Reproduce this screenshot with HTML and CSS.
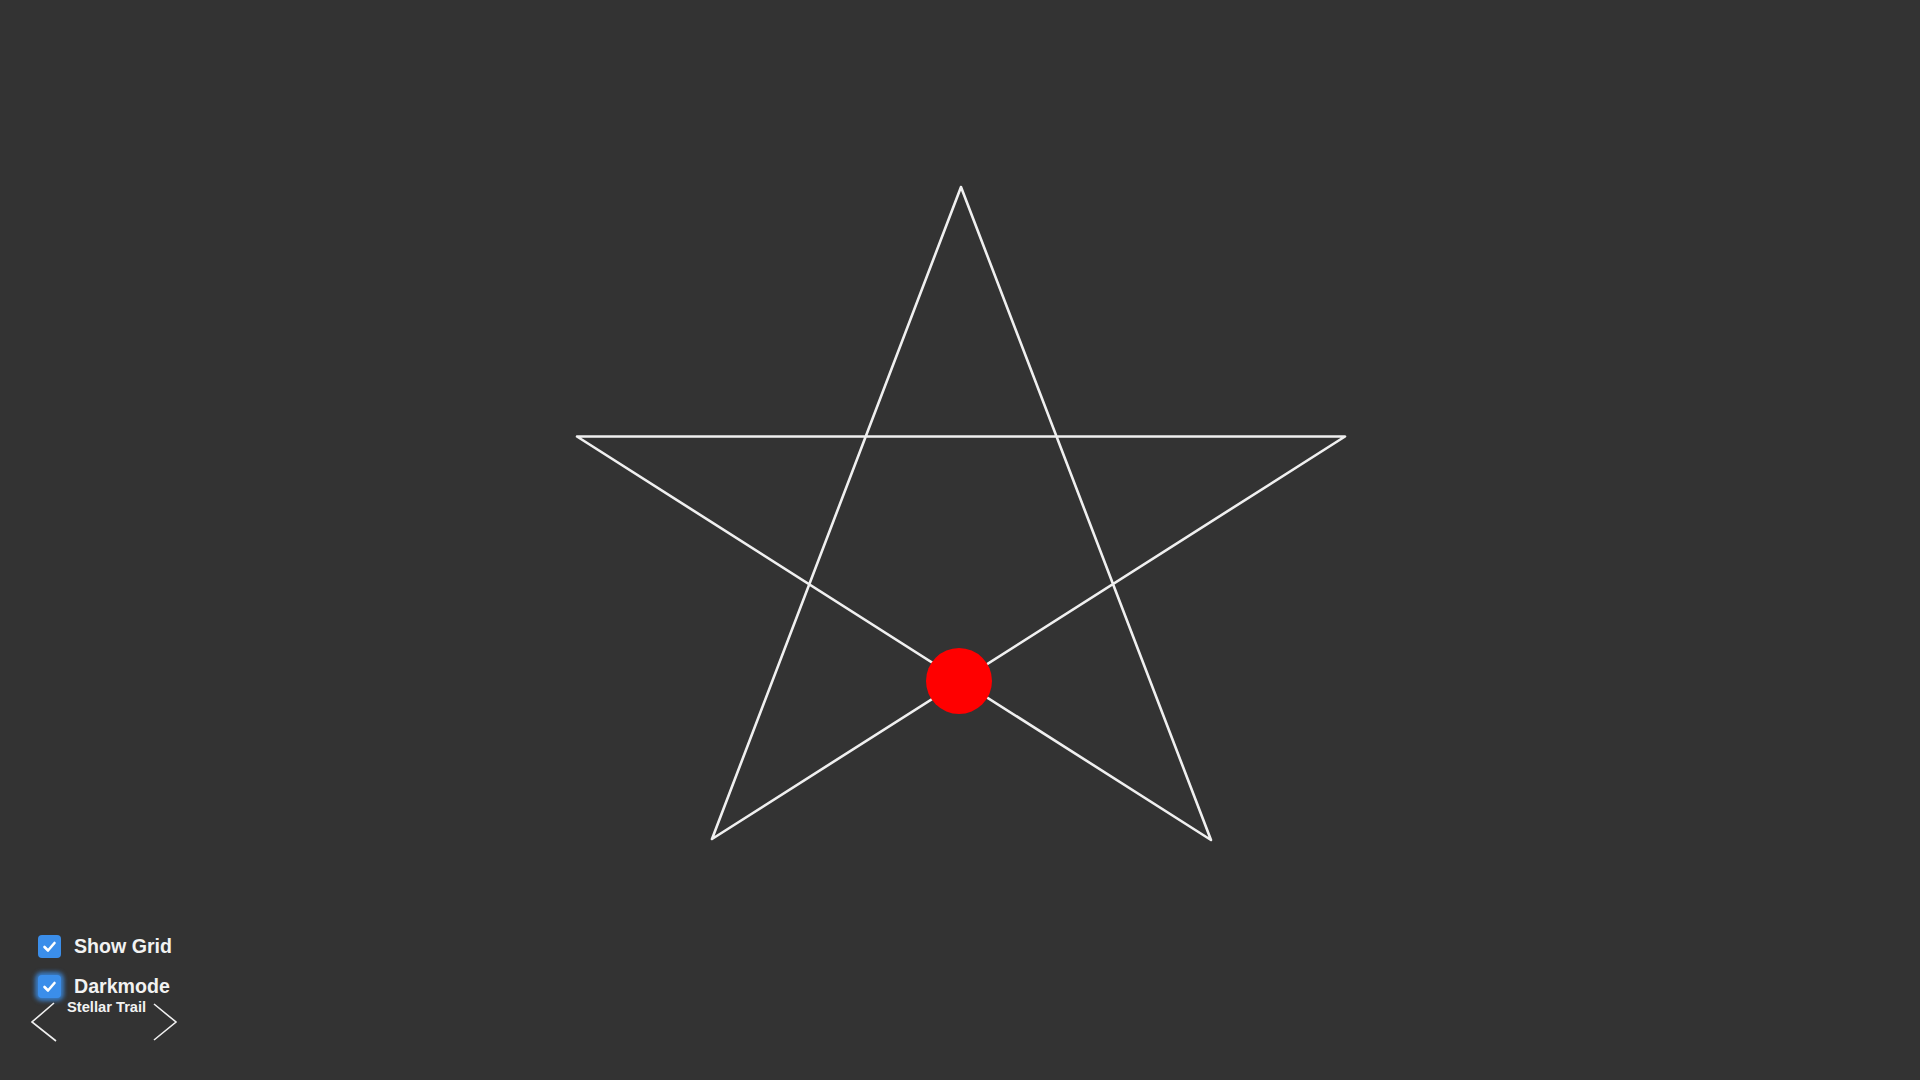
FILE: index.html
```html
<!DOCTYPE html>
<html>
<head>
<meta charset="utf-8">
<title>Stellar Trail</title>
<link rel="stylesheet" href="styles.css">
</head>
<body>
<div class="stage">
  <svg class="canvas" width="1920" height="1080" viewBox="0 0 1920 1080">
    <polygon class="star" points="961,187 712,839 1345,436.5 577,436.5 1211,840"/>
    <circle class="dot" cx="959" cy="681" r="33"/>
  </svg>
  <div class="panel">
    <div class="row">
      <span class="box"><svg width="23" height="23" viewBox="0 0 23 23"><polyline points="6.5,12 10,15.5 16.5,8" class="tick"/></svg></span>
      <span class="label">Show Grid</span>
    </div>
    <div class="row">
      <span class="box focus"><svg width="23" height="23" viewBox="0 0 23 23"><polyline points="6.5,12 10,15.5 16.5,8" class="tick"/></svg></span>
      <span class="label">Darkmode</span>
    </div>
    <div class="nav">
      <svg class="chev" width="27" height="46" viewBox="0 0 27 46"><polyline points="23,5 1,24 25,43"/></svg>
      <span class="title">Stellar Trail</span>
      <svg class="chev" width="30" height="46" viewBox="0 0 30 46"><polyline points="2,6 24,24 2,42"/></svg>
    </div>
  </div>
</div>
</body>
</html>
```

FILE: styles.css
```css
html, body {
  margin: 0;
  padding: 0;
  background: #333333;
  overflow: hidden;
}
.stage {
  position: relative;
  width: 1920px;
  height: 1080px;
  background: #333333;
  font-family: "Liberation Sans", Arial, sans-serif;
}
.canvas {
  position: absolute;
  left: 0;
  top: 0;
  display: block;
}
.star {
  fill: none;
  stroke: #f0f0f0;
  stroke-width: 2.6;
  stroke-linejoin: round;
}
.dot {
  fill: #ff0000;
}
.panel {
  position: absolute;
  left: 31px;
  top: 935px;
  display: flex;
  flex-direction: column;
  gap: 17px;
}
.row {
  display: flex;
  align-items: center;
  height: 23px;
  padding-left: 7px;
}
.box {
  width: 23px;
  height: 23px;
  border-radius: 4px;
  background: #3b8eea;
  display: block;
}
.box svg {
  display: block;
}
.box.focus {
  box-shadow: 0 0 4px 3px rgba(59, 142, 234, 0.8);
}
.tick {
  fill: none;
  stroke: #ffffff;
  stroke-width: 2.6;
  stroke-linecap: round;
  stroke-linejoin: round;
}
.label {
  margin-left: 13px;
  color: #f2f2f2;
  font-weight: bold;
  font-size: 19.6px;
  line-height: 23px;
}
.nav {
  display: flex;
  align-items: flex-start;
  margin-top: -17px;
  height: 46px;
}
.chev {
  display: block;
}
.chev polyline {
  fill: none;
  stroke: #f0f0f0;
  stroke-width: 1.6;
}
.title {
  margin-left: 9px;
  width: 85px;
  margin-top: 1px;
  color: #f2f2f2;
  font-weight: bold;
  font-size: 14.7px;
  line-height: 17px;
  white-space: nowrap;
}
```
